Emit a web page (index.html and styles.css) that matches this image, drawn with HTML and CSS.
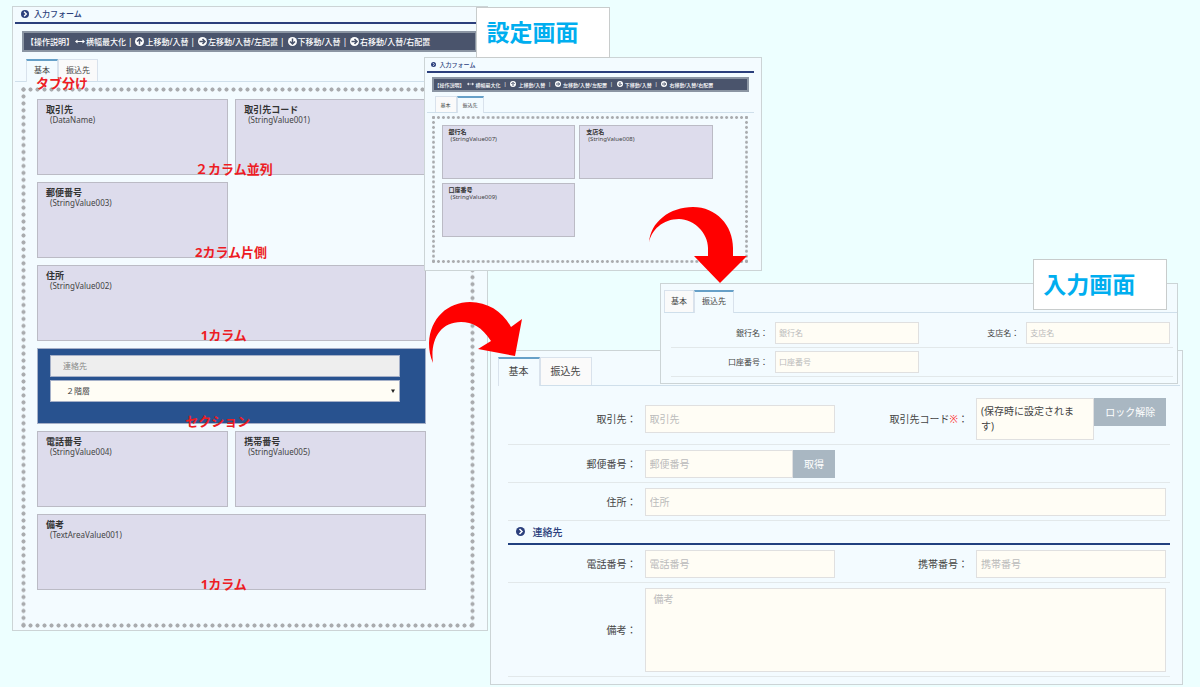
FILE: index.html
```
<!DOCTYPE html>
<html lang="ja">
<head>
  <meta charset="UTF-8">
  <meta name="viewport" content="width=device-width, initial-scale=1.0">
  <title>入力フォーム</title>
  <link rel="stylesheet" href="styles.css">
</head>
<body>

  <!-- アイコン定義 -->
  <svg class="defs" aria-hidden="true">
    <symbol id="chevron" viewBox="0 0 18 18">
      <circle cx="9" cy="9" r="9" fill="#2b3f7c"/>
      <path d="M7 4l5 5-5 5" fill="none" stroke="#fff" stroke-width="3"/>
    </symbol>
    <symbol id="arrow" viewBox="0 0 18 18">
      <circle cx="9" cy="9" r="9" fill="#fff"/>
      <path d="M3 9h10M9 4l5 5-5 5" fill="none" stroke="#4a546c" stroke-width="3"/>
    </symbol>
    <symbol id="wide" viewBox="0 0 20 10">
      <path d="M0 5l5-4v3h10V1l5 4-5 4V6H5v3z" fill="#fff"/>
    </symbol>
  </svg>

  <main class="stage">

    <!-- 設定画面 基本タブ -->
    <section class="panel setting setting-main">
      <h2 class="title"><svg><use href="#chevron"/></svg>入力フォーム</h2>
      <div class="toolbar">
        <span>【操作説明】</span>
        <svg class="wide"><use href="#wide"/></svg><span>横幅最大化</span><i>|</i>
        <svg class="up"><use href="#arrow"/></svg><span>上移動/入替</span><i>|</i>
        <svg><use href="#arrow"/></svg><span>左移動/入替/左配置</span><i>|</i>
        <svg class="down"><use href="#arrow"/></svg><span>下移動/入替</span><i>|</i>
        <svg><use href="#arrow"/></svg><span>右移動/入替/右配置</span>
      </div>
      <div class="tabs">
        <button class="tab active" type="button">基本</button>
        <button class="tab" type="button">振込先</button>
        <span class="note note-tab">タブ分け</span>
      </div>
      <div class="board">
        <div class="card"><h3>取引先</h3><p>(DataName)</p><span class="note">２カラム並列</span></div>
        <div class="card"><h3>取引先コード</h3><p>(StringValue001)</p></div>
        <div class="card newline"><h3>郵便番号</h3><p>(StringValue003)</p><span class="note">2カラム片側</span></div>
        <div class="card full"><h3>住所</h3><p>(StringValue002)</p><span class="note">1カラム</span></div>
        <div class="card full section">
          <input type="text" value="連絡先" aria-label="セクション名">
          <select aria-label="階層"><option>２階層</option></select>
          <span class="note">セクション</span>
        </div>
        <div class="card"><h3>電話番号</h3><p>(StringValue004)</p></div>
        <div class="card"><h3>携帯番号</h3><p>(StringValue005)</p></div>
        <div class="card full"><h3>備考</h3><p>(TextAreaValue001)</p><span class="note">1カラム</span></div>
      </div>
    </section>

    <!-- 入力画面 基本タブ -->
    <section class="panel entry entry-main">
      <div class="tabs">
        <button class="tab active" type="button">基本</button>
        <button class="tab" type="button">振込先</button>
      </div>
      <form class="form">
        <div class="row">
          <div class="field">
            <label for="name">取引先：</label>
            <input id="name" type="text" placeholder="取引先">
          </div>
          <div class="field">
            <label for="code">取引先コード<b>※</b>：</label>
            <div class="group top">
              <textarea id="code" class="code" readonly>(保存時に設定されます)</textarea>
              <button type="button" class="unlock">ロック解除</button>
            </div>
          </div>
        </div>
        <div class="row">
          <div class="field">
            <label for="zip">郵便番号：</label>
            <div class="group">
              <input id="zip" type="text" placeholder="郵便番号">
              <button type="button">取得</button>
            </div>
          </div>
        </div>
        <div class="row">
          <div class="field full">
            <label for="address">住所：</label>
            <input id="address" type="text" placeholder="住所">
          </div>
        </div>
        <h2 class="subtitle"><svg><use href="#chevron"/></svg>連絡先</h2>
        <div class="row">
          <div class="field">
            <label for="tel">電話番号：</label>
            <input id="tel" type="text" placeholder="電話番号">
          </div>
          <div class="field">
            <label for="mobile">携帯番号：</label>
            <input id="mobile" type="text" placeholder="携帯番号">
          </div>
        </div>
        <div class="row">
          <div class="field full">
            <label for="memo">備考：</label>
            <textarea id="memo" class="memo" placeholder="備考"></textarea>
          </div>
        </div>
      </form>
    </section>

    <!-- 設定画面 振込先タブ -->
    <section class="panel setting setting-sub">
      <h2 class="title"><svg><use href="#chevron"/></svg>入力フォーム</h2>
      <div class="toolbar">
        <span>【操作説明】</span>
        <svg class="wide"><use href="#wide"/></svg><span>横幅最大化</span><i>|</i>
        <svg class="up"><use href="#arrow"/></svg><span>上移動/入替</span><i>|</i>
        <svg><use href="#arrow"/></svg><span>左移動/入替/左配置</span><i>|</i>
        <svg class="down"><use href="#arrow"/></svg><span>下移動/入替</span><i>|</i>
        <svg><use href="#arrow"/></svg><span>右移動/入替/右配置</span>
      </div>
      <div class="tabs">
        <button class="tab" type="button">基本</button>
        <button class="tab active" type="button">振込先</button>
      </div>
      <div class="board">
        <div class="card"><h3>銀行名</h3><p>(StringValue007)</p></div>
        <div class="card"><h3>支店名</h3><p>(StringValue008)</p></div>
        <div class="card"><h3>口座番号</h3><p>(StringValue009)</p></div>
      </div>
    </section>

    <!-- 入力画面 振込先タブ -->
    <section class="panel entry entry-sub">
      <div class="tabs">
        <button class="tab" type="button">基本</button>
        <button class="tab active" type="button">振込先</button>
      </div>
      <form class="form">
        <div class="row">
          <div class="field">
            <label for="bank">銀行名：</label>
            <input id="bank" type="text" placeholder="銀行名">
          </div>
          <div class="field">
            <label for="branch">支店名：</label>
            <input id="branch" type="text" placeholder="支店名">
          </div>
        </div>
        <div class="row">
          <div class="field">
            <label for="account">口座番号：</label>
            <input id="account" type="text" placeholder="口座番号">
          </div>
        </div>
      </form>
    </section>

    <div class="caption caption-setting">設定画面</div>
    <div class="caption caption-entry">入力画面</div>

    <svg class="flow flow-main" viewBox="0 0 96 64" aria-hidden="true">
      <path d="M5 63C2 56 1 50 1 43C2 18 20 2 42 2C60 2 75 12 83 27L94 19L87 56L50 49L63 41C54 27 44 22 33 22C12 22 2 40 5 63Z" fill="#f00"/>
    </svg>
    <svg class="flow flow-sub" viewBox="0 0 100 78" aria-hidden="true">
      <path d="M1 37C2 16 22 1 45 1C68 1 85 19 85 42V50H99L72 77L46 50H60V42C60 27 46 13 31 13C15 13 3 24 1 37Z" fill="#f00"/>
    </svg>

  </main>

</body>
</html>
```

FILE: styles.css
```
* {
  box-sizing: border-box;
}

body {
  margin: 0;
  background: #edffff;
  color: #444;
  font-family: "Noto Sans", "Noto Sans CJK JP", sans-serif;
}

h2, h3, p {
  margin: 0;
}

button, input, select, textarea {
  font: inherit;
  color: inherit;
  margin: 0;
  border-radius: 0;
}

.defs {
  position: absolute;
  width: 0;
  height: 0;
}

.stage {
  position: relative;
  min-height: 100vh;
  overflow: hidden;
}

/* パネル共通 */
.panel {
  position: absolute;
  background: #f3fbff;
  border: 1px solid #ccd4d6;
}

.setting-main {
  left: 1%;
  top: 6px;
  width: 39.7%;
  font-size: 8px;
  padding: 0 0 1px 2px;
}

.setting-sub {
  left: 35.3%;
  top: 57px;
  width: 28.2%;
  font-size: 5px;
  padding: 0 0 6px 2px;
}

.entry-main {
  left: 40.8%;
  top: 350px;
  width: 57.8%;
  font-size: 10px;
  padding: 6px 2px 7px 7px;
}

.entry-sub {
  left: 55%;
  top: 283px;
  width: 43.2%;
  font-size: 8px;
  padding: 6px 0 6px 3px;
}

/* タイトル */
.title {
  display: flex;
  align-items: center;
  gap: 5px;
  height: 17px;
  margin-right: 5px;
  padding: 0 0 2px 6px;
  border-bottom: 2px solid #2b3f7c;
  color: #2b3f7c;
  font-size: 8px;
  font-weight: 500;
}

.title svg {
  width: 8px;
  height: 8px;
}

.setting-sub .title {
  gap: 4px;
  height: 15px;
  margin-right: 7px;
  padding: 0 0 0 4px;
  font-size: 6px;
}

.setting-sub .title svg {
  width: 5px;
  height: 5px;
}

/* 操作説明バー */
.toolbar {
  display: flex;
  align-items: center;
  gap: 1px;
  height: 21px;
  margin: 7px 10px 0 7px;
  padding: 0 0 1px 2px;
  border: 2px solid #8b95a3;
  background: #4a546c;
  color: #fff;
  font-weight: 500;
  white-space: nowrap;
  overflow: hidden;
}

.toolbar svg {
  flex: none;
  width: 9px;
  height: 9px;
}

.toolbar .wide {
  width: 10px;
  height: 5px;
}

.toolbar i {
  font-style: normal;
  margin: 0 2px 0 1px;
}

.toolbar .up {
  transform: rotate(-90deg);
}

.toolbar .down {
  transform: rotate(90deg);
}

.setting-sub .toolbar {
  gap: 2px;
  height: 15px;
  margin: 4px 12px 0 5px;
  padding-left: 1px;
}

.setting-sub .toolbar svg {
  width: 6px;
  height: 6px;
}

.setting-sub .toolbar .wide {
  width: 7px;
  height: 4px;
}

/* タブ */
.tabs {
  display: flex;
  position: relative;
  height: 23px;
  border-bottom: 1px solid #cfdfeb;
}

.tab {
  height: 22px;
  padding: 0 7px 2px;
  border: 1px solid #d9e2ec;
  border-bottom: 0;
  background: #fafafa;
  line-height: 18px;
}

.tab.active {
  height: 23px;
  padding-bottom: 4px;
  border-top: 2px solid #66a0c8;
  background: #f3fbff;
}

.setting-main .tabs {
  margin-top: 7px;
  padding-left: 11px;
}

.setting-sub .tabs {
  height: 17px;
  margin: 4px 7px 0 0;
  padding-left: 8px;
}

.setting-sub .tab {
  height: 16px;
  padding: 0 5px;
  line-height: 14px;
}

.setting-sub .tab.active {
  height: 17px;
  padding-bottom: 2px;
}

.entry-main .tabs {
  height: 29px;
}

.entry-main .tab {
  height: 28px;
  padding: 0 10px 2px;
  line-height: 24px;
}

.entry-main .tab.active {
  height: 29px;
  padding-bottom: 4px;
}

.entry-sub .tab:first-child {
  padding: 0 6px 2px;
}

/* 点線で囲んだ配置エリア */
.board {
  --dot: radial-gradient(circle, #a9abae 35%, transparent 48%);
  display: grid;
  grid-template-columns: 1fr 1fr;
  gap: 7px;
  margin: 4px 11px 0 5px;
  padding: 13px 50px 39px 17px;
  background:
    var(--dot) 0 0 / 7px 7px round no-repeat,
    var(--dot) 0 100% / 7px 7px round no-repeat,
    var(--dot) 0 0 / 7px 7px no-repeat round,
    var(--dot) 100% 0 / 7px 7px no-repeat round;
}

.setting-sub .board {
  --dot: radial-gradient(circle, #a9abae 30%, transparent 50%);
  gap: 4px;
  margin: 2px 12px 0 4px;
  padding: 10px 36px 27px 11px;
  background-size: 5px 5px;
}

.card {
  position: relative;
  height: 76px;
  padding: 4px 8px;
  border: 1px solid #bbbbc5;
  background: #dddcec;
}

.card.newline {
  grid-column: 1;
}

.card.full {
  grid-column: 1 / -1;
}

.card h3 {
  color: #333;
  font-size: 9px;
  font-weight: bold;
  line-height: 11px;
}

.card p {
  padding-left: 4px;
  font-size: 8px;
  line-height: 10px;
}

.setting-sub .card {
  height: 54px;
  padding: 2px 6px;
}

.setting-sub .card h3 {
  font-size: 6px;
  line-height: 8px;
}

.setting-sub .card p {
  padding-left: 2px;
  font-size: 6px;
  line-height: 7px;
}

/* セクション */
.section {
  display: flex;
  flex-direction: column;
  gap: 3px;
  padding: 6px 25px 0 12px;
  border-color: #a5b0c8;
  background: #28528f;
}

.section input,
.section select {
  width: 100%;
  height: 22px;
  padding: 0 12px 2px;
  border: 1px solid #a5b0c8;
  background: #eee;
  color: #888;
}

.section select {
  padding: 0 15px 2px;
  appearance: none;
  background: #fffdf5 url("data:image/svg+xml,%3Csvg xmlns='http://www.w3.org/2000/svg' viewBox='0 0 8 8'%3E%3Cpath d='M0 1h8L4 8z' fill='%23222'/%3E%3C/svg%3E") right 4px center / 4px 4px no-repeat;
  color: #444;
}

/* 赤字の注釈 */
.note {
  position: absolute;
  z-index: 1;
  left: 42%;
  bottom: -2px;
  color: #ed1c24;
  font-size: 13px;
  font-weight: bold;
  line-height: 14px;
  white-space: nowrap;
}

.card:not(.full) .note {
  left: 83%;
}

.section .note {
  left: 38%;
  bottom: -5px;
}

.note-tab {
  left: 21px;
  bottom: -9px;
}

/* 入力フォーム */
.form {
  padding: 7px 10px 0;
}

.entry-sub .form {
  padding: 6px 4px 0 7px;
}

.row {
  display: grid;
  grid-template-columns: 1fr 1fr;
  padding: 5px 0 4px;
  border-bottom: 1px solid #e2e8ea;
}

.entry-sub .row {
  padding: 3px 0;
}

.field {
  display: grid;
  grid-template-columns: 129px 1fr;
  align-items: center;
  gap: 8px;
  padding-right: 4px;
}

.entry-sub .field {
  grid-template-columns: 97px 1fr;
  gap: 7px;
  padding-right: 3px;
}

.field.full {
  grid-column: 1 / -1;
}

.field label {
  padding-bottom: 2px;
  text-align: right;
  white-space: nowrap;
}

.field label b {
  color: #f33;
  font-weight: normal;
}

.field input,
.field textarea {
  display: block;
  width: 100%;
  min-width: 0;
  height: 28px;
  padding: 0 4px 1px;
  border: 1px solid #e0e0e0;
  background: #fffdf5;
}

.entry-sub .field input {
  height: 22px;
  padding: 0 3px 2px;
}

.field ::placeholder {
  color: #bbb;
}

.group {
  display: flex;
}

.group button {
  flex: none;
  width: 42px;
  height: 28px;
  padding: 0 0 2px;
  border: 0;
  background: #a9b7c2;
  color: #fff;
}

.group .unlock {
  width: 72px;
}

.field textarea {
  resize: none;
  line-height: 15px;
  overflow: hidden;
}

.field .code {
  height: 42px;
  padding: 5px 10px 5px 4px;
}

.field .memo {
  height: 84px;
  padding: 3px 8px;
}

.subtitle {
  display: flex;
  align-items: center;
  gap: 8px;
  height: 24px;
  padding: 0 0 1px 8px;
  border-bottom: 2px solid #21407f;
  color: #2b3f7c;
  font-size: 10px;
  font-weight: 500;
}

.subtitle svg {
  width: 9px;
  height: 9px;
}

/* 画面名のラベル */
.caption {
  position: absolute;
  width: 134px;
  padding: 0 9px;
  border: 1px solid #c8cccc;
  background: #fff;
  color: #00aeef;
  font-size: 23px;
  font-weight: bold;
  line-height: 49px;
}

.caption-setting {
  left: 39.7%;
  top: 7px;
}

.caption-entry {
  left: 86.1%;
  top: 259px;
}

/* 赤い矢印 */
.flow {
  position: absolute;
}

.flow-main {
  left: 35.7%;
  top: 300px;
  width: 96px;
}

.flow-sub {
  left: 54%;
  top: 206px;
  width: 100px;
}
```
